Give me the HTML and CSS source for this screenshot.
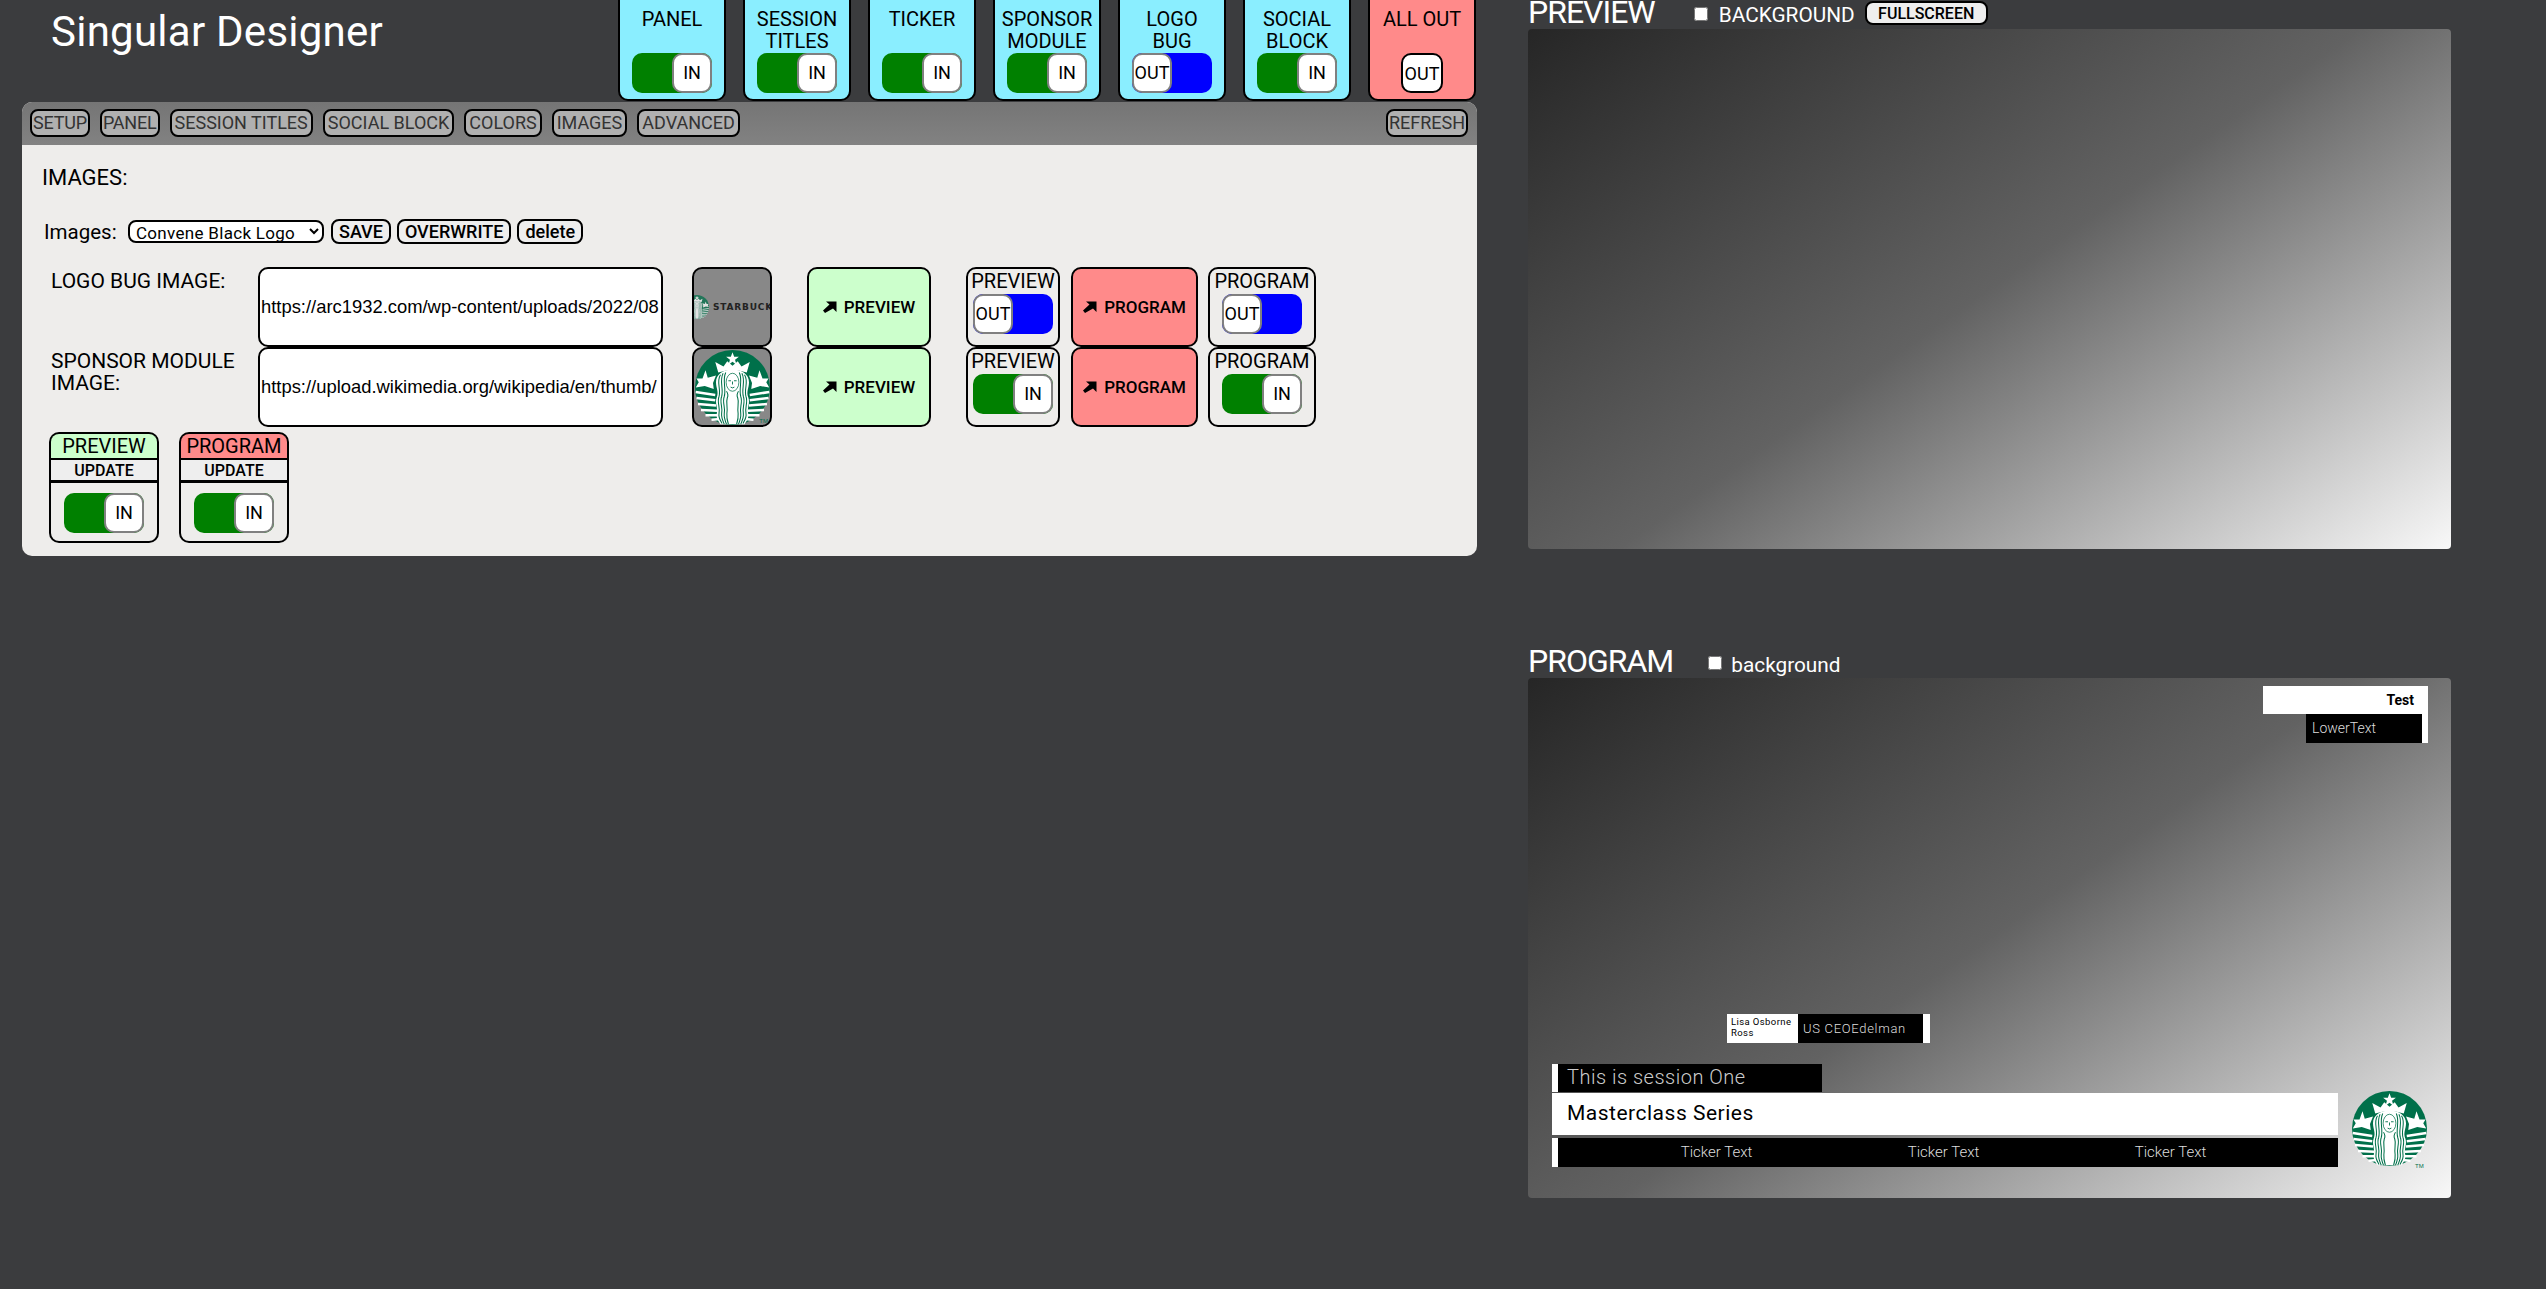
FILE: index.html
```html
<!DOCTYPE html>
<html lang="en">
<head>
<meta charset="utf-8">
<title>Singular Designer</title>
<link rel="stylesheet" href="styles.css">
</head>
<body>
<svg class="defs" aria-hidden="true">
  <symbol id="siren" viewBox="0 0 100 100">
    <circle cx="50" cy="50" r="50" fill="#00704a"/>
    <polygon fill="#fff" points="50,3 52.200,9 58.500,9 53.400,13 55.300,19.500 50,15.500 44.700,19.500 46.600,13 41.500,9 47.800,9"/>
    <path fill="#fff" d="M27 16 L38 22 L43 15 L50 21 L57 15 L62 22 L73 16 L69 30 Q50 23 31 30Z"/>
    <polygon fill="#fff" points="14,27 17,37 28,34 24,44 25,52 13,48 1,50 5,43 2,38 10,38"/>
    <polygon fill="#fff" points="86,27 83,37 72,34 76,44 75,52 87,48 99,50 95,43 98,38 90,38"/>
    <g fill="none" stroke="#fff" stroke-width="3.400">
      <path d="M1 56 L27 60M2 64 L27 67M4 72 L28 74M8 80 L30 81M14 87 L32 87M22 93 L34 92"/>
      <path d="M99 56 L73 60M98 64 L73 67M96 72 L72 74M92 80 L70 81M86 87 L68 87M78 93 L66 92"/>
    </g>
    <path fill="#fff" d="M50 26 C37 26 28 33 28 43 C28 51 32 55 29 63 C26 71 31 77 29 85 C28 90 31 95 34 99 H66 C69 95 72 90 71 85 C69 77 74 71 71 63 C68 55 72 51 72 43 C72 33 63 26 50 26Z"/>
    <g fill="none" stroke="#00704a" stroke-width="1.400">
      <path d="M34 33 C28 42 35 52 32 62 C29 70 34 77 32 85 C31 90 34 94 36 98"/>
      <path d="M37.500 31 C32 41 38.500 52 35.500 62 C32.500 70 37.500 77 35.500 85 C35 90 37 94 39 99"/>
      <path d="M41 30 C36 40 42 52 39 62 C36 70 41 77 39 85 C38.500 90 40 94 42 99"/>
      <path d="M42 55 C44 58 45 60 43 64 C41 70 44 76 42.500 85 C42 90 43 94 44.500 99"/>
      <path d="M66 33 C72 42 65 52 68 62 C71 70 66 77 68 85 C69 90 66 94 64 98"/>
      <path d="M62.500 31 C68 41 61.500 52 64.500 62 C67.500 70 62.500 77 64.500 85 C65 90 63 94 61 99"/>
      <path d="M59 30 C64 40 58 52 61 62 C64 70 59 77 61 85 C61.500 90 60 94 58 99"/>
      <path d="M58 55 C56 58 55 60 57 64 C59 70 56 76 57.500 85 C58 90 57 94 55.500 99"/>
      <ellipse cx="50" cy="43" rx="8.500" ry="12" fill="#fff" stroke-width="1"/>
      <path d="M44.500 41 H48 M52 41 H55.500 M47.500 49.500 Q50 51.500 52.500 49.500 M50 42 V46" stroke-width="1.200"/>
    </g>
  </symbol>
</svg>

<div class="app">
  <div class="left">
    <header class="topbar">
      <h1 class="title">Singular Designer</h1>
      <div class="cards">
        <div class="card"><div class="card-label">PANEL</div><div class="toggle in"><span class="knob">IN</span></div></div>
        <div class="card"><div class="card-label">SESSION TITLES</div><div class="toggle in"><span class="knob">IN</span></div></div>
        <div class="card"><div class="card-label">TICKER</div><div class="toggle in"><span class="knob">IN</span></div></div>
        <div class="card"><div class="card-label">SPONSOR MODULE</div><div class="toggle in"><span class="knob">IN</span></div></div>
        <div class="card"><div class="card-label">LOGO<br>BUG</div><div class="toggle out"><span class="knob">OUT</span></div></div>
        <div class="card"><div class="card-label">SOCIAL BLOCK</div><div class="toggle in"><span class="knob">IN</span></div></div>
        <div class="card card-red"><div class="card-label">ALL OUT</div><button class="allout">OUT</button></div>
      </div>
    </header>

    <section class="panel">
      <nav class="tabs">
        <button class="tab tab-short">SETUP</button>
        <button class="tab tab-short">PANEL</button>
        <button class="tab">SESSION TITLES</button>
        <button class="tab">SOCIAL BLOCK</button>
        <button class="tab">COLORS</button>
        <button class="tab">IMAGES</button>
        <button class="tab">ADVANCED</button>
        <button class="tab tab-refresh">REFRESH</button>
      </nav>
      <div class="panel-body">
        <h2 class="section-title">IMAGES:</h2>
        <div class="preset-row">
          <label class="preset-label" for="preset">Images:</label>
          <select class="preset-select" id="preset"><option>Convene Black Logo</option></select>
          <button class="pill">SAVE</button>
          <button class="pill">OVERWRITE</button>
          <button class="pill">delete</button>
        </div>

        <div class="image-row">
          <div class="image-label">LOGO BUG IMAGE:</div>
          <input class="url" type="text" value="https://arc1932.com/wp-content/uploads/2022/08">
          <div class="thumb thumb-bug">
            <svg class="bug-mark"><use href="#siren"/></svg>
            <span class="bug-word">STARBUCK</span>
          </div>
          <button class="send send-preview"><svg class="arrow" viewBox="0 0 14 14"><path d="M2 13 L0 10.500 L6.500 4.500 L3 1.500 H13.500 V12 L10 8.500 Z"/></svg>PREVIEW</button>
          <div class="state state-preview"><div class="state-label">PREVIEW</div><div class="toggle out"><span class="knob">OUT</span></div></div>
          <button class="send send-program"><svg class="arrow" viewBox="0 0 14 14"><path d="M2 13 L0 10.500 L6.500 4.500 L3 1.500 H13.500 V12 L10 8.500 Z"/></svg>PROGRAM</button>
          <div class="state state-program"><div class="state-label">PROGRAM</div><div class="toggle out"><span class="knob">OUT</span></div></div>
        </div>
        <div class="image-row">
          <div class="image-label">SPONSOR MODULE IMAGE:</div>
          <input class="url" type="text" value="https://upload.wikimedia.org/wikipedia/en/thumb/">
          <div class="thumb">
            <svg class="thumb-logo"><use href="#siren"/></svg>
            <span class="tm tm-thumb">TM</span>
          </div>
          <button class="send send-preview"><svg class="arrow" viewBox="0 0 14 14"><path d="M2 13 L0 10.500 L6.500 4.500 L3 1.500 H13.500 V12 L10 8.500 Z"/></svg>PREVIEW</button>
          <div class="state state-preview"><div class="state-label">PREVIEW</div><div class="toggle in"><span class="knob">IN</span></div></div>
          <button class="send send-program"><svg class="arrow" viewBox="0 0 14 14"><path d="M2 13 L0 10.500 L6.500 4.500 L3 1.500 H13.500 V12 L10 8.500 Z"/></svg>PROGRAM</button>
          <div class="state state-program"><div class="state-label">PROGRAM</div><div class="toggle in"><span class="knob">IN</span></div></div>
        </div>

        <div class="updates">
          <div class="update">
            <div class="update-head head-green">PREVIEW</div>
            <button class="update-btn">UPDATE</button>
            <div class="update-foot"><div class="toggle in"><span class="knob">IN</span></div></div>
          </div>
          <div class="update">
            <div class="update-head head-red">PROGRAM</div>
            <button class="update-btn">UPDATE</button>
            <div class="update-foot"><div class="toggle in"><span class="knob">IN</span></div></div>
          </div>
        </div>
      </div>
    </section>
  </div>

  <div class="right">
    <div class="monitor-head head-preview">
      <span class="monitor-title">PREVIEW</span>
      <input class="bg-check" type="checkbox">
      <span class="bg-label">BACKGROUND</span>
      <button class="fullscreen">FULLSCREEN</button>
    </div>
    <div class="screen"></div>

    <div class="monitor-head head-program">
      <span class="monitor-title">PROGRAM</span>
      <input class="bg-check bg-check-program" type="checkbox">
      <span class="bg-label">background</span>
    </div>
    <div class="screen">
      <div class="gfx-corner">
        <div class="corner-top">Test</div>
        <div class="corner-low">LowerText</div>
      </div>
      <div class="gfx-social">
        <div class="social-name">Lisa Osborne Ross</div>
        <div class="social-role">US CEOEdelman</div>
      </div>
      <div class="gfx-session">This is session One</div>
      <div class="gfx-title">Masterclass Series</div>
      <div class="gfx-ticker"><span>Ticker Text</span><span>Ticker Text</span><span>Ticker Text</span></div>
      <svg class="gfx-logo"><use href="#siren"/></svg>
      <span class="tm tm-screen">TM</span>
    </div>
  </div>
</div>
</body>
</html>
```
FILE: styles.css
```css
* { box-sizing: border-box; }
html, body { margin: 0; height: 100%; }
body {
  background: #3b3c3e;
  font-family: Roboto, "Liberation Sans", sans-serif;
  color: #000;
  overflow: hidden;
}
button, select, input { font-family: inherit; color: #000; margin: 0; }
.defs { position: absolute; width: 0; height: 0; }

.app { display: flex; align-items: flex-start; }
.left { width: 1477px; padding-left: 22px; flex: none; }
.right { width: 923px; margin-left: 51px; flex: none; }

/* top bar */
.topbar { display: flex; height: 102px; align-items: flex-end; overflow: hidden; padding-bottom: 1px; }
.title {
  margin: 0 0 auto 29px;
  width: 567px;
  padding-top: 8px;
  font-size: 42px;
  line-height: 48px;
  font-weight: 400;
  letter-spacing: .25px;
  color: #fff;
  white-space: nowrap;
}
.cards { display: flex; gap: 17px; }
.card {
  width: 108px;
  height: 110px;
  padding-top: 15px;
  background: #8aeeff;
  border: 2px solid #000;
  border-radius: 10px;
  display: flex;
  flex-direction: column;
  align-items: center;
}
.card-red { background: #ff8a8a; }
.card-label {
  height: 44px;
  margin-bottom: 1px;
  font-size: 20px;
  line-height: 22px;
  font-weight: 400;
  text-align: center;
}

.toggle {
  width: 80px;
  height: 40px;
  border-radius: 10px;
  display: flex;
  flex: none;
}
.toggle.in { background: #008000; justify-content: flex-end; }
.toggle.out { background: #0000ff; justify-content: flex-start; }
.knob {
  width: 40px;
  height: 40px;
  background: #fff;
  border: 2px solid #808080;
  border-radius: 10px;
  font-size: 18px;
  line-height: 36px;
  text-align: center;
  white-space: nowrap;
}
.allout {
  width: 42px;
  height: 40px;
  padding: 0;
  background: #fff;
  border: 2px solid #000;
  border-radius: 10px;
  font-size: 18px;
}

/* panel */
.panel { width: 1455px; height: 454px; border-radius: 10px; overflow: hidden; background: #eeedeb; }
.tabs {
  height: 43px;
  padding: 7px 9px 0 8px;
  background: linear-gradient(#757575, #828282);
  display: flex;
  align-items: flex-start;
  gap: 10px;
}
.tab {
  height: 28px;
  padding: 0 3px;
  background: #b0b0b0;
  color: #333;
  border: 2px solid #000;
  border-radius: 8px;
  font-size: 18px;
  line-height: 24px;
  white-space: nowrap;
}
.tab-short { padding: 0 1px; letter-spacing: -.2px; }
.tab-refresh { margin-left: auto; padding: 0 1px; }

.panel-body { padding: 21px 0 0 20px; }
.section-title { margin: 0; font-size: 22px; line-height: 24px; font-weight: 400; }
.preset-row { margin-top: 29px; margin-left: 2px; height: 25px; display: flex; align-items: center; }
.preset-label { width: 84px; font-size: 20.500px; font-weight: 400; }
.preset-select {
  width: 196px;
  height: 23px;
  padding: 0 0 0 2px;
  background: #fff;
  border: 2px solid #000;
  border-radius: 8px;
  font-size: 17px;
  line-height: 19px;
  letter-spacing: .3px;
  font-weight: 400;
  margin-right: 7px;
}
.pill {
  height: 25px;
  padding: 0 6px;
  margin-right: 6px;
  background: #eeeeee;
  border: 2px solid #000;
  border-radius: 8px;
  font-size: 18px;
  font-weight: 500;
  line-height: 20px;
  white-space: nowrap;
}

.image-row { display: flex; height: 80px; margin: 0 0 0 8px; }
.preset-row + .image-row { margin-top: 23px; }
.image-label { width: 208px; padding: 3px 10px 0 1px; font-size: 21px; line-height: 22px; font-weight: 400; }
.url {
  width: 405px;
  height: 80px;
  padding: 0 1px;
  background: #fff;
  border: 2px solid #000;
  border-radius: 10px;
  font-family: "Liberation Sans", sans-serif;
  font-size: 18.400px;
}
.thumb {
  position: relative;
  width: 80px;
  height: 80px;
  margin-left: 29px;
  background: #888;
  border: 2px solid #000;
  border-radius: 10px;
  overflow: hidden;
  display: flex;
  align-items: center;
  justify-content: center;
}
.thumb-logo { width: 75px; height: 75px; flex: none; }
.thumb-bug { justify-content: flex-start; }
.bug-mark { width: 24px; height: 24px; flex: none; margin: 0 4px 0 -9px; opacity: .75; }
.bug-word {
  font-family: "DejaVu Sans", sans-serif;
  font-size: 9px;
  font-weight: 700;
  letter-spacing: .8px;
  color: #222;
  white-space: nowrap;
}
.tm { position: absolute; font-family: "Liberation Sans", sans-serif; font-size: 6px; line-height: 7px; color: #00704a; }
.tm-thumb { right: 2px; bottom: 0; }
.tm-screen { left: 887px; top: 485px; }

.send {
  height: 80px;
  padding: 0;
  border: 2px solid #000;
  border-radius: 10px;
  font-size: 17px;
  font-weight: 500;
  display: flex;
  align-items: center;
  justify-content: center;
  gap: 7px;
}
.send-preview { width: 124px; margin-left: 35px; background: #ccffcc; }
.send-program { width: 127px; margin-left: 11px; background: #ff8a8a; }
.arrow { width: 14px; height: 14px; flex: none; }
.state {
  height: 80px;
  border: 2px solid #000;
  border-radius: 10px;
  display: flex;
  flex-direction: column;
  align-items: center;
}
.state-preview { width: 94px; margin-left: 35px; }
.state-program { width: 108px; margin-left: 10px; }
.state-label { height: 25px; font-size: 20px; line-height: 24px; font-weight: 400; }

.updates { display: flex; gap: 20px; margin: 5px 0 0 7px; }
.update { display: flex; flex-direction: column; width: 110px; }
.update-head {
  height: 26px;
  border: 2px solid #000;
  border-bottom: 0;
  border-radius: 10px 10px 0 0;
  font-size: 20px;
  line-height: 24px;
  font-weight: 400;
  text-align: center;
}
.head-green { background: #ccffcc; }
.head-red { background: #ff8a8a; }
.update-btn {
  height: 25px;
  padding: 0;
  background: #eeeeee;
  border: 2px solid #000;
  border-width: 2px 2px 3px;
  font-size: 16px;
  font-weight: 500;
}
.update-foot {
  height: 60px;
  padding-top: 2px;
  border: 2px solid #000;
  border-top: 0;
  border-radius: 0 0 10px 10px;
  display: flex;
  align-items: center;
  justify-content: center;
}

/* monitors */
.monitor-head { display: flex; align-items: flex-start; color: #fff; white-space: nowrap; }
.head-preview { height: 29px; }
.head-program { height: 129px; align-items: flex-end; padding-bottom: 3px; }
.monitor-title { font-size: 32px; line-height: 28px; font-weight: 400; letter-spacing: -1px; }
.head-preview .monitor-title { margin-top: -2px; }
.bg-check { width: 14px; height: 14px; margin: 7px 11px 0 39px; flex: none; }
.bg-check-program { margin: 0 9px 5px 35px; }
.bg-label { font-size: 20.800px; line-height: 20px; font-weight: 400; padding-top: 5px; }
.head-program .bg-label { padding: 0; margin-bottom: 0; }
.fullscreen {
  height: 24px;
  width: 123px;
  margin: 1px 0 0 10px;
  padding: 0;
  background: #eee;
  border: 2px solid #000;
  border-radius: 8px;
  font-size: 16px;
  font-weight: 500;
}
.screen {
  position: relative;
  width: 923px;
  height: 520px;
  border-radius: 4px;
  background: linear-gradient(145deg, #262626 0%, #626262 50%, #f8f8f8 100%);
  overflow: hidden;
}

/* on-air graphics */
.gfx-corner {
  position: absolute;
  top: 8px;
  right: 23px;
  width: 165px;
  height: 57px;
  border-right: 6px solid #fff;
  display: flex;
  flex-direction: column;
  align-items: flex-end;
}
.corner-top {
  width: 100%;
  height: 28px;
  padding-right: 8px;
  background: #fff;
  font-size: 14px;
  line-height: 28px;
  font-weight: 700;
  text-align: right;
}
.corner-low {
  width: 116px;
  height: 29px;
  padding-left: 6px;
  background: #000;
  color: #ddd;
  font-size: 14px;
  font-weight: 300;
  line-height: 29px;
}
.gfx-social {
  position: absolute;
  left: 199px;
  top: 336px;
  display: flex;
  height: 29px;
  border-right: 7px solid #fff;
}
.social-name {
  width: 71px;
  padding: 2px 3px 0 4px;
  background: #fff;
  font-size: 9.500px;
  line-height: 11px;
  letter-spacing: .4px;
}
.social-role {
  width: 125px;
  padding-left: 5px;
  background: #000;
  color: #ddd;
  font-size: 13px;
  font-weight: 300;
  line-height: 29px;
  letter-spacing: .7px;
}
.gfx-session {
  position: absolute;
  left: 24px;
  top: 386px;
  width: 270px;
  height: 28px;
  padding-left: 9px;
  background: #000;
  border-left: 6px solid #fff;
  color: #ccc;
  font-size: 20px;
  font-weight: 300;
  line-height: 26px;
  letter-spacing: .5px;
}
.gfx-title {
  position: absolute;
  left: 24px;
  top: 415px;
  width: 786px;
  height: 42px;
  padding-left: 15px;
  background: #fff;
  font-size: 21px;
  line-height: 40px;
  letter-spacing: .5px;
}
.gfx-ticker {
  position: absolute;
  left: 24px;
  top: 460px;
  width: 786px;
  height: 29px;
  padding-left: 45px;
  background: #000;
  border-left: 6px solid #fff;
  color: #ddd;
  display: flex;
  font-size: 15px;
  font-weight: 300;
  line-height: 28px;
}
.gfx-ticker span { width: 227px; text-align: center; }
.gfx-logo { position: absolute; left: 824px; top: 413px; width: 75px; height: 75px; }
```
